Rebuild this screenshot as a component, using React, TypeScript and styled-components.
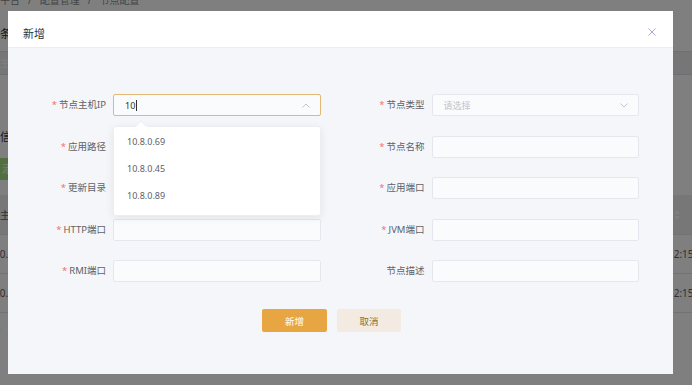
import React from "react";
import styled, { createGlobalStyle } from "styled-components";

const GlobalStyle = createGlobalStyle`
  html, body {
    margin: 0;
    padding: 0;
    width: 692px;
    height: 385px;
    overflow: hidden;
    background: #ffffff;
    font-family: "Noto Sans", "Noto Sans CJK SC", sans-serif;
  }
  * { box-sizing: border-box; }
`;

/* ---------- background page (under the mask) ---------- */
const Page = styled.div`
  position: relative;
  width: 692px;
  height: 385px;
  overflow: hidden;
  background: #ffffff;
  display: flex;
  flex-direction: column;
`;

const Breadcrumb = styled.div`
  margin-top: -7px;
  height: 14px;
  line-height: 14px;
  font-size: 10px;
  color: #888888;
  display: flex;
  gap: 8px;
  margin-left: -20px;
  white-space: nowrap;
`;

const SectionHead = styled.div`
  height: 45px;
  padding-top: 20px;
  line-height: 14px;
  font-size: 11px;
  color: #303133;
  border-bottom: 1px solid #dcdfe6;
`;

const FilterRow = styled.div`
  height: 23px;
  line-height: 22px;
  font-size: 10px;
  color: #ffffff;
  background: #ececec;
  border-bottom: 1px solid #dcdfe6;
`;

const ListTitle = styled.div`
  margin-top: 55px;
  line-height: 14px;
  font-size: 11px;
  color: #303133;
`;

const AddButton = styled.div`
  margin-top: 14px;
  margin-left: -10px;
  width: 60px;
  height: 22px;
  line-height: 22px;
  padding-left: 12px;
  font-size: 10px;
  color: #ffffff;
  background: #a0e07e;
  border-radius: 2px;
`;

const Table = styled.div`
  margin-top: 15px;
  display: flex;
  flex-direction: column;
`;

const TableRow = styled.div<{ $head?: boolean }>`
  display: grid;
  grid-template-columns: 673px 1fr;
  align-items: center;
  height: ${(p) => (p.$head ? "40px" : "39px")};
  background: ${(p) => (p.$head ? "#eeeeee" : "#ffffff")};
  border-bottom: 1px solid #e4e4e4;
  font-size: 10px;
  color: #606266;
  white-space: nowrap;
`;

const Cell = styled.div<{ $shift: number }>`
  margin-left: ${(p) => p.$shift}px;
  overflow: visible;
`;

const SortIcon = styled.svg`
  display: block;
  margin-left: 1px;
`;

const Pagination = styled.div`
  margin-top: 10px;
  line-height: 14px;
  font-size: 10px;
  color: #bbbbbb;
  margin-left: -30px;
  white-space: nowrap;
`;

const Mask = styled.div`
  position: absolute;
  inset: 0;
  background: rgba(0, 0, 0, 0.5);
`;

/* ---------- dialog ---------- */
const Dialog = styled.div`
  position: absolute;
  left: 8px;
  top: 11px;
  width: 665px;
  background: #f5f6fa;
  display: flex;
  flex-direction: column;
`;

const DialogHeader = styled.div`
  display: flex;
  align-items: flex-start;
  justify-content: space-between;
  padding: 16px 17px 6px 15px;
  background: #ffffff;
  border-bottom: 1px solid #ebeef5;
`;

const DialogTitle = styled.div`
  line-height: 14px;
  font-size: 11px;
  color: #303133;
`;

const CloseIcon = styled.svg`
  display: block;
  margin-top: 1px;
`;

const DialogBody = styled.div`
  padding: 46px 34px 42px 20px;
  display: flex;
  flex-direction: column;
  gap: 27px;
`;

const FormGrid = styled.div`
  display: grid;
  grid-template-columns: 1fr 1fr;
  column-gap: 26px;
  row-gap: 19.5px;
`;

const FormItem = styled.div`
  display: grid;
  grid-template-columns: 85px 1fr;
  align-items: center;
`;

const Label = styled.label`
  text-align: right;
  padding-right: 7px;
  font-size: 9.5px;
  line-height: 14px;
  color: #606266;
  white-space: nowrap;
`;

const Star = styled.span`
  color: #f56c6c;
  margin-right: 2px;
`;

const Field = styled.div<{ $focused?: boolean }>`
  position: relative;
  height: 22px;
  display: flex;
  align-items: center;
  justify-content: space-between;
  padding: 0 10px 0 11px;
  border: 1px solid ${(p) => (p.$focused ? "#e2b874" : "#e4e7ed")};
  border-radius: 2px;
  background: #fafbfd;
  font-size: 9px;
  color: #303133;
`;

const Value = styled.span`
  display: flex;
  align-items: center;
`;

const Caret = styled.span`
  display: inline-block;
  width: 1px;
  height: 11px;
  margin-left: 1px;
  background: #303133;
`;

const Placeholder = styled.span`
  color: #c0c4cc;
`;

const Dropdown = styled.div`
  position: absolute;
  left: -1px;
  right: -1px;
  top: 31px;
  padding: 1px 0 6px;
  background: #ffffff;
  border: 1px solid #eceef3;
  border-radius: 3px;
  box-shadow: 0 2px 8px rgba(0, 0, 0, 0.08);
  z-index: 2;
`;

const Arrow = styled.span`
  position: absolute;
  top: -5px;
  left: 23px;
  width: 8px;
  height: 8px;
  background: #ffffff;
  border-left: 1px solid #eceef3;
  border-top: 1px solid #eceef3;
  transform: rotate(45deg);
`;

const Option = styled.div`
  height: 27px;
  line-height: 27px;
  padding: 0 13px;
  font-size: 9px;
  color: #606266;
`;

const ButtonRow = styled.div`
  display: flex;
  justify-content: center;
  gap: 10px;
  padding-right: 4px;
`;

const Button = styled.button<{ $primary?: boolean }>`
  width: ${(p) => (p.$primary ? "65px" : "64px")};
  height: 23px;
  border: none;
  border-radius: 2px;
  font-family: inherit;
  font-size: 9.5px;
  background: ${(p) => (p.$primary ? "#e7a641" : "#f3ebe1")};
  color: ${(p) => (p.$primary ? "#ffffff" : "#8b6b40")};
  padding: 0;
`;

const Chevron = ({ up }: { up?: boolean }) => (
  <svg width="8" height="5" viewBox="0 0 8 5">
    <polyline
      points={up ? "0.5,4.5 4,1 7.5,4.5" : "0.5,0.5 4,4 7.5,0.5"}
      fill="none"
      stroke="#c0c4cc"
      strokeWidth="1"
    />
  </svg>
);

type Item = { label: string; required?: boolean };

const left: Item[] = [
  { label: "应用路径", required: true },
  { label: "更新目录", required: true },
  { label: "HTTP端口", required: true },
  { label: "RMI端口", required: true },
];
const right: Item[] = [
  { label: "节点名称", required: true },
  { label: "应用端口", required: true },
  { label: "JVM端口", required: true },
  { label: "节点描述" },
];

const FieldLabel = ({ item }: { item: Item }) => (
  <Label>
    {item.required && <Star>*</Star>}
    {item.label}
  </Label>
);

export default function App() {
  return (
    <>
      <GlobalStyle />
      <Page>
        <Breadcrumb>
          <span>运维平台</span>
          <span>/</span>
          <span>配置管理</span>
          <span>/</span>
          <span>节点配置</span>
        </Breadcrumb>
        <SectionHead>条件</SectionHead>
        <FilterRow>主机IP</FilterRow>
        <ListTitle>信息列表</ListTitle>
        <AddButton>添加</AddButton>
        <Table>
          <TableRow $head>
            <Cell $shift={0}>主机IP</Cell>
            <Cell $shift={0}>
              <SortIcon width="6" height="10" viewBox="0 0 6 10">
                <polygon points="3,0 6,4 0,4" fill="#ffffff" />
                <polygon points="0,6 6,6 3,10" fill="#ffffff" />
              </SortIcon>
            </Cell>
          </TableRow>
          <TableRow>
            <Cell $shift={-6}>10.4.12.69</Cell>
            <Cell $shift={-5}>12:15:36</Cell>
          </TableRow>
          <TableRow>
            <Cell $shift={-6}>10.4.12.45</Cell>
            <Cell $shift={-5}>12:15:42</Cell>
          </TableRow>
        </Table>
        <Pagination>共 2 条</Pagination>

        <Mask />

        <Dialog>
          <DialogHeader>
            <DialogTitle>新增</DialogTitle>
            <CloseIcon width="8" height="8" viewBox="0 0 8 8">
              <path d="M0.5 0.5 L7.5 7.5 M7.5 0.5 L0.5 7.5" stroke="#a3a8cc" strokeWidth="1" />
            </CloseIcon>
          </DialogHeader>
          <DialogBody>
            <FormGrid>
              <FormItem>
                <FieldLabel item={{ label: "节点主机IP", required: true }} />
                <Field $focused>
                  <Value>
                    10
                    <Caret />
                  </Value>
                  <Chevron up />
                  <Dropdown>
                    <Arrow />
                    <Option>10.8.0.69</Option>
                    <Option>10.8.0.45</Option>
                    <Option>10.8.0.89</Option>
                  </Dropdown>
                </Field>
              </FormItem>
              <FormItem>
                <FieldLabel item={{ label: "节点类型", required: true }} />
                <Field>
                  <Placeholder>请选择</Placeholder>
                  <Chevron />
                </Field>
              </FormItem>
              {left.map((l, i) => (
                <React.Fragment key={l.label}>
                  <FormItem>
                    <FieldLabel item={l} />
                    <Field />
                  </FormItem>
                  <FormItem>
                    <FieldLabel item={right[i]} />
                    <Field />
                  </FormItem>
                </React.Fragment>
              ))}
            </FormGrid>
            <ButtonRow>
              <Button $primary>新增</Button>
              <Button>取消</Button>
            </ButtonRow>
          </DialogBody>
        </Dialog>
      </Page>
    </>
  );
}
